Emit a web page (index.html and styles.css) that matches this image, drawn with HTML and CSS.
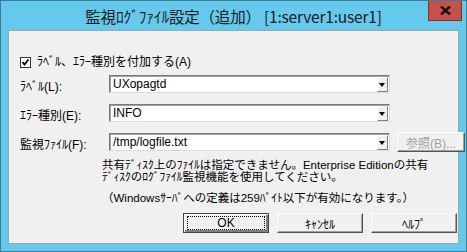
FILE: index.html
```html
<!DOCTYPE html>
<html lang="ja">
<head>
    <meta charset="UTF-8">
    <title>監視ﾛｸﾞﾌｧｲﾙ設定</title>
    <link rel="stylesheet" href="styles.css">
</head>
<body>
    <div class="window">
        <!-- Title bar -->
        <div class="titlebar">
            <div></div>
            <div class="title">監視ﾛｸﾞﾌｧｲﾙ設定（追加） [1:server1:user1]</div>
            <div class="close">
                <svg width="11" height="9" viewBox="0 0 11 9">
                    <path d="M1 0.5 L10 8.5 M10 0.5 L1 8.5" stroke="#111" stroke-width="2.4"/>
                </svg>
            </div>
        </div>

        <!-- Dialog body -->
        <div class="client">
            <label class="check-row">
                <span class="checkbox">
                    <svg width="9" height="9" viewBox="0 0 9 9">
                        <path d="M1.5 4 L3.5 6.5 L7.5 1.5" stroke="#000" stroke-width="1.8" fill="none"/>
                    </svg>
                </span>
                ﾗﾍﾞﾙ、ｴﾗｰ種別を付加する(A)
            </label>

            <div class="form">
                <div class="label">ﾗﾍﾞﾙ(L):</div>
                <div class="combo">
                    <span class="combo-text">UXopagtd</span>
                    <span class="combo-arrow"></span>
                </div>
                <div></div>

                <div class="label">ｴﾗｰ種別(E):</div>
                <div class="combo">
                    <span class="combo-text">INFO</span>
                    <span class="combo-arrow"></span>
                </div>
                <div></div>

                <div class="label">監視ﾌｧｲﾙ(F):</div>
                <div class="combo">
                    <span class="combo-text">/tmp/logfile.txt</span>
                    <span class="combo-arrow"></span>
                </div>
                <button class="btn btn-disabled">参照(B)...</button>
            </div>

            <div class="note">
                <p>共有ﾃﾞｨｽｸ上のﾌｧｲﾙは指定できません。Enterprise Editionの共有<br>ﾃﾞｨｽｸのﾛｸﾞﾌｧｲﾙ監視機能を使用してください。</p>
                <p class="note-limit">（Windowsｻｰﾊﾞへの定義は259ﾊﾞｲﾄ以下が有効になります。）</p>
            </div>

            <div class="buttons">
                <button class="btn btn-default"><span class="focus">OK</span></button>
                <button class="btn">ｷｬﾝｾﾙ</button>
                <button class="btn">ﾍﾙﾌﾟ</button>
            </div>
        </div>
    </div>
</body>
</html>
```

FILE: styles.css
```css
/* Whole page is the dialog window */
body {
    margin: 0;
    font-family: "Liberation Sans", "Noto Sans CJK JP", sans-serif;
    font-size: 12px;
    color: #000;
}

.window {
    width: 467px;
    height: 252px;
    box-sizing: border-box;
    background-color: #64c9ec;
    border: 1px solid #3b7f96;
    display: flex;
    flex-direction: column;
}

/* Caption */
.titlebar {
    height: 29px;
    display: grid;
    grid-template-columns: 1fr auto 1fr;
}

.title {
    font-family: "Noto Sans CJK JP", sans-serif;
    font-size: 15.5px;
    line-height: 31px;
    color: #1b1b1b;
    white-space: nowrap;
    letter-spacing: -0.2px;
}

.close {
    justify-self: end;
    width: 32px;
    height: 19px;
    margin-right: 4px;
    background-color: #c7504a;
    border: 1px solid #7e3430;
    border-top: none;
    display: flex;
    justify-content: center;
    align-items: center;
}

/* Client area */
.client {
    flex: 1;
    margin: 0 7px 7px 7px;
    background-color: #f0f0f0;
    border: 1px solid #9aa8ad;
    padding: 25px 0 0 11px;
    display: flex;
    flex-direction: column;
}

.check-row {
    display: flex;
    align-items: center;
    gap: 6px;
    height: 12px;
    line-height: 12px;
}

.checkbox {
    width: 9px;
    height: 9px;
    border: 1px solid #333;
    background-color: #fff;
    display: flex;
    justify-content: center;
    align-items: center;
}

.form {
    margin-top: 7px;
    display: grid;
    grid-template-columns: 82px 281px 68px;
    grid-auto-rows: 18px;
    row-gap: 11px;
    column-gap: 7px;
    align-items: center;
}

.label {
    padding-top: 3px;
}

.combo {
    height: 18px;
    box-sizing: border-box;
    background-color: #fff;
    border: 1px solid;
    border-color: #7a7a7a #dcdcdc #dcdcdc #7a7a7a;
    box-shadow: inset 1px 1px 0 #a0a0a0;
    display: flex;
    align-items: center;
}

.combo-text {
    flex: 1;
    padding-left: 3px;
    line-height: 14px;
}

.combo-arrow {
    width: 9px;
    height: 13px;
    margin-right: 1px;
    background-color: #f0f0f0;
    border: 1px solid;
    border-color: #fff #808080 #808080 #fff;
    position: relative;
}

.combo-arrow::after {
    content: "";
    position: absolute;
    left: 1px;
    top: 5px;
    border-left: 3.5px solid transparent;
    border-right: 3.5px solid transparent;
    border-top: 4px solid #000;
}

/* Buttons */
.btn {
    font-family: inherit;
    font-size: 12px;
    color: #000;
    background-color: #f0f0f0;
    border: 1px solid;
    border-color: #ffffff #555 #555 #ffffff;
    box-shadow: inset -1px -1px 0 #a0a0a0;
    padding: 0;
    height: 20px;
}

.btn-disabled {
    color: #a0a0a0;
    height: 20px;
}

.note {
    margin-left: 82px;
    margin-top: 8px;
    line-height: 12px;
    font-size: 11.5px;
}

.note p {
    margin: 0;
}

.note-limit {
    padding-top: 9px;
}

.buttons {
    margin-top: 9px;
    display: flex;
    gap: 8px;
    padding-left: 163px;
}

.buttons .btn {
    width: 86px;
}

.btn-default {
    border: 1px solid #444;
    box-shadow: inset 1px 1px 0 #fff, inset -2px -2px 0 #808080;
    padding: 2px 3px;
}

.focus {
    display: block;
    border: 1px dotted #000;
    line-height: 12px;
}
```
